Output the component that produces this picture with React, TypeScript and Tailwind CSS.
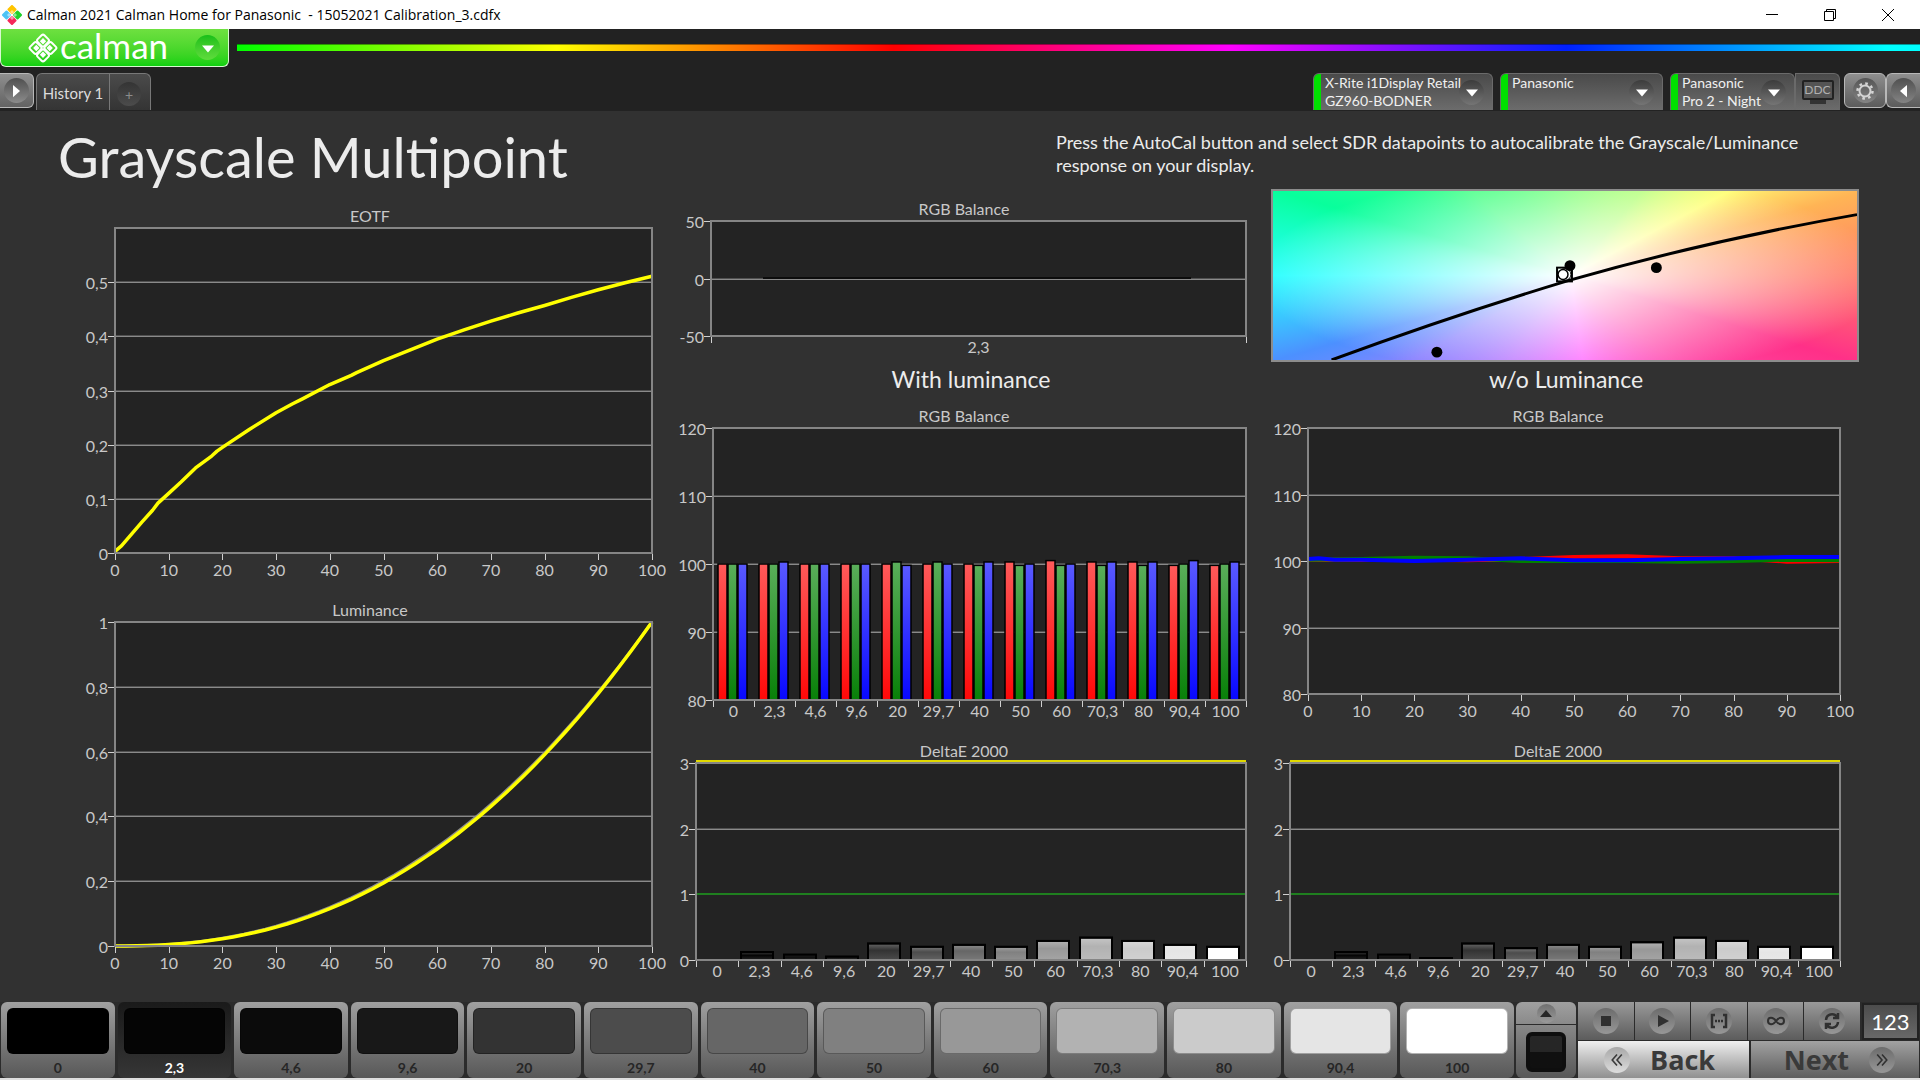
import type { ReactNode } from "react";

const LEVELS = ["0", "2,3", "4,6", "9,6", "20", "29,7", "40", "50", "60", "70,3", "80", "90,4", "100"];
const GRAYS = ["#000000", "#050505", "#0b0b0b", "#181818", "#333333", "#4c4c4c", "#666666", "#808080", "#989898", "#b2b2b2", "#cbcbcb", "#e5e5e5", "#ffffff"];
const TENS = ["0", "10", "20", "30", "40", "50", "60", "70", "80", "90", "100"];

// [stimulus, value]
const EOTF: number[][] = [
    [0, 0.003], [1.2, 0.013], [5, 0.057], [7, 0.079], [8, 0.092], [10, 0.11], [12.3, 0.131], [15, 0.157],
    [18, 0.179], [19, 0.188], [20, 0.195], [25, 0.228], [30, 0.259], [33, 0.275], [35, 0.285], [40, 0.311],
    [44, 0.328], [45, 0.333], [50, 0.355], [55, 0.375], [60, 0.395], [65, 0.412], [70, 0.428], [75, 0.443],
    [80, 0.457], [85, 0.472], [90, 0.486], [95, 0.499], [100, 0.511],
];
const LUMINANCE = Array.from({ length: 51 }, (_, i) => [i * 2, Math.pow(i / 50, 2.36)]);
const LUMINANCE_TARGET = Array.from({ length: 51 }, (_, i) => [i * 2, Math.pow(i / 50, 2.32)]);

const RGB_BARS: number[][] = [
    [100, 100, 100], [100, 100, 100.3], [100, 100, 100], [100, 100, 100], [100, 100.3, 99.8], [100, 100.3, 100],
    [100, 99.8, 100.3], [100.3, 99.8, 100], [100.5, 99.8, 100], [100.3, 99.8, 100.3], [100.3, 99.8, 100.3],
    [99.8, 100, 100.5], [99.8, 100, 100.3],
];

const RED_LINE = [[0, 100.2], [20, 100.2], [30, 100.1], [40, 100.3], [50, 100.6], [60, 100.7], [70, 100.4], [80, 100.4], [90, 99.9], [100, 100]];
const GREEN_LINE = [[0, 100.2], [10, 100.3], [20, 100.5], [30, 100.4], [40, 100], [60, 100], [70, 99.9], [80, 100], [90, 100.2], [100, 100.1]];
const BLUE_LINE = [[0, 100.3], [2, 100.4], [5, 100.2], [10, 100.2], [20, 100], [30, 100.2], [40, 100.4], [50, 100.1], [60, 100.1], [70, 100.3], [80, 100.4], [90, 100.6], [100, 100.6]];

const DELTA_WITH = [0, 0.12, 0.08, 0.05, 0.25, 0.2, 0.23, 0.2, 0.29, 0.34, 0.29, 0.23, 0.2];
const DELTA_WITHOUT = [0, 0.12, 0.08, 0.03, 0.25, 0.18, 0.23, 0.2, 0.27, 0.34, 0.29, 0.2, 0.2];

interface Plot {
    x: number;
    y: number;
    w: number;
    h: number;
    min: number;
    max: number;
}

const toY = (p: Plot, v: number) => p.y + p.h - ((v - p.min) / (p.max - p.min)) * p.h;
const toPoints = (p: Plot, data: number[][]) =>
    data.map(([x, v]) => `${p.x + (x / 100) * p.w},${toY(p, v)}`).join(" ");

interface ChartProps {
    title: string;
    titleX: number;
    width: number;
    height: number;
    plot: Plot;
    yTicks: [number, string][];
    xLabels: string[];
    banded?: boolean; // labels sit between the ticks
    children?: ReactNode;
}

function Chart({ title, titleX, width, height, plot, yTicks, xLabels, banded, children }: ChartProps) {
    const bottom = plot.y + plot.h;
    const tickCount = banded ? xLabels.length + 1 : xLabels.length;
    const step = plot.w / (tickCount - 1);
    return (
        <svg viewBox={`0 0 ${width} ${height}`} className="block h-auto w-full" role="img" aria-label={title}>
            <rect x={plot.x} y={plot.y} width={plot.w} height={plot.h} fill="#232323" />
            {yTicks.map(([v, label]) => {
                const y = Math.round(toY(plot, v));
                return (
                    <g key={label}>
                        <rect x={plot.x} y={y - 1} width={plot.w} height="1" fill="#505050" />
                        <rect x={plot.x} y={y} width={plot.w} height="1" fill="#8a8a8a" />
                        <rect x={plot.x - 7} y={y} width="6" height="1" fill="#d0d0d0" />
                        <text x={plot.x - 7} y={y + 7} textAnchor="end" fontSize="16" fill="#c8c8c8">{label}</text>
                    </g>
                );
            })}
            {children}
            <rect x={plot.x} y={plot.y} width={plot.w} height={plot.h} fill="none" stroke="#858585" strokeWidth="2" />
            {Array.from({ length: tickCount }, (_, i) => (
                <rect key={i} x={Math.round(plot.x + i * step)} y={bottom + 1} width="1" height="6" fill="#d0d0d0" />
            ))}
            {xLabels.map((label, i) => (
                <text
                    key={label}
                    x={plot.x + (banded ? i + 0.5 : i) * step}
                    y={bottom + (banded ? 17 : 23)}
                    textAnchor="middle"
                    fontSize="16"
                    fill="#c8c8c8"
                >
                    {label}
                </text>
            ))}
            <text x={titleX} y={plot.y - 6} textAnchor="middle" fontSize="16" fill="#c8c8c8">{title}</text>
        </svg>
    );
}

function DeltaChart({ width, plotX, titleX, plotW, values, id }: { width: number; plotX: number; titleX: number; plotW: number; values: number[]; id: string }) {
    const plot = { x: plotX, y: 33, w: plotW, h: 197, min: 0, max: 3 };
    const slot = plot.w / 13;
    return (
        <Chart
            title="DeltaE 2000"
            titleX={titleX}
            width={width}
            height={272}
            plot={plot}
            yTicks={[[3, "3"], [2, "2"], [1, "1"], [0, "0"]]}
            xLabels={LEVELS}
            banded
        >
            <defs>
                <linearGradient id={id} x1="0" y1="0" x2="0" y2="1">
                    <stop offset="0" stopColor="#fff" stopOpacity="0.25" />
                    <stop offset="0.4" stopColor="#fff" stopOpacity="0" />
                    <stop offset="1" stopColor="#fff" stopOpacity="0.12" />
                </linearGradient>
            </defs>
            <rect x={plot.x} y={plot.y - 3} width={plot.w} height="2" fill="#e0d800" />
            <rect x={plot.x} y={Math.round(toY(plot, 1)) - 1} width={plot.w} height="2" fill="#1f7f1f" />
            {values.map((v, i) => {
                if (v === 0) return null;
                const y = toY(plot, v);
                const box = { x: Math.round(plot.x + i * slot + 3), y, width: 32, height: plot.y + plot.h - y };
                return (
                    <g key={i} stroke="#000" strokeWidth="2">
                        <rect {...box} fill={GRAYS[i]} />
                        <rect {...box} fill={`url(#${id})`} />
                    </g>
                );
            })}
        </Chart>
    );
}

function CieChart() {
    return (
        <div className="h-[173px] pr-[5px] pl-[3px]">
            <div className="h-full border-2 border-[#8c8c8c] bg-[radial-gradient(ellipse_54%_60%_at_51%_50%,#ffffff_0%,rgba(255,255,255,0)_100%),conic-gradient(from_0deg_at_51%_50%,#8cff84_0deg,#b8ff80_40deg,#ffff78_62deg,#ffb455_74deg,#ff7c68_90deg,#ff3088_107deg,#ff50b0_130deg,#ff70ff_172deg,#c080ff_215deg,#8c84ff_242deg,#4c90ff_254deg,#28ffff_270deg,#08ff9c_286deg,#50ff8c_310deg,#8cff84_360deg)]">
                <svg viewBox="0 0 588 172" preserveAspectRatio="none" className="block h-full w-full" role="img" aria-label="CIE diagram">
                    <path d="M59 172Q180 127 298 91Q436 51 588 24" fill="none" stroke="#000" strokeWidth="3" />
                    <circle cx="165" cy="164" r="5.5" />
                    <circle cx="386" cy="78" r="5.5" />
                    <circle cx="299" cy="76" r="5.5" />
                    <rect x="286" y="78" width="15" height="14" fill="none" stroke="#000" strokeWidth="2" />
                    <circle cx="294" cy="85" r="6" fill="none" stroke="#000" />
                    <circle cx="292" cy="85" r="5" fill="#fff" stroke="#000" strokeWidth="1.5" />
                </svg>
            </div>
        </div>
    );
}

function ArrowDown() {
    return (
        <span className="flex size-[25px] shrink-0 items-center justify-center rounded-full bg-linear-to-b from-[#3c3c3c] to-[#757575]">
            <svg viewBox="0 0 14 8" className="h-2 w-3 translate-y-px fill-white"><path d="M0 0h14L7 8z" /></svg>
        </span>
    );
}

function DeviceTab({ line1, line2 }: { line1: string; line2?: string }) {
    return (
        <button className="flex h-[37px] w-full items-center overflow-hidden rounded-t-md border border-b-0 border-[#6a6a6a] bg-linear-to-b from-[#4a4a4a] to-[#6c6c6c] pr-2 text-left text-[14px] leading-[18px] text-[#f0f0f0]">
            <span className="mr-1 h-full w-[7px] shrink-0 bg-[#00e000]" />
            <span className="h-full min-w-0 flex-1 whitespace-nowrap">
                {line1}
                <br />
                {line2}
            </span>
            <ArrowDown />
        </button>
    );
}

function ToolButton({ label, children }: { label: string; children: ReactNode }) {
    return (
        <button aria-label={label} className="flex h-[38px] flex-1 items-center justify-center bg-linear-to-b from-[#9a9a9a] to-[#5c5c5c]">
            <span className="flex size-[26px] items-center justify-center rounded-full bg-linear-to-b from-[#6c6c6c] to-[#979797]">
                <svg viewBox="0 0 20 20" className="size-5" fill="none" stroke="#303030" strokeWidth="2">{children}</svg>
            </span>
        </button>
    );
}

function TitleBar() {
    return (
        <header className="flex h-[29px] items-center bg-white pl-0.5 font-['Open_Sans',sans-serif] text-[14px] text-black">
            <svg viewBox="0 0 20 20" className="mr-[5px] size-5">
                <rect x="6.500" y="1" width="7" height="7" rx="1" transform="rotate(45 10 4.5)" fill="#ffc400" />
                <rect x="1" y="6.500" width="7" height="7" rx="1" transform="rotate(45 4.5 10)" fill="#4cc3f5" />
                <rect x="12" y="6.500" width="7" height="7" rx="1" transform="rotate(45 15.5 10)" fill="#1fd02a" />
                <rect x="6.500" y="12" width="7" height="7" rx="1" transform="rotate(45 10 15.5)" fill="#f5285a" />
                <path d="M10 5l2 2-2 2-2-2zM10 11l2 2-2 2-2-2zM7 8l2 2-2 2-2-2zM13 8l2 2-2 2-2-2z" fill="#fff" opacity="0.5" />
            </svg>
            <h2 className="flex-1 whitespace-pre">Calman 2021 Calman Home for Panasonic  - 15052021 Calibration_3.cdfx</h2>
            <button aria-label="Minimize" className="flex h-full w-[58px] items-center justify-center">
                <svg viewBox="0 0 12 12" className="size-3" stroke="#000"><path d="M0 5.500h12" /></svg>
            </button>
            <button aria-label="Restore" className="flex h-full w-[58px] items-center justify-center">
                <svg viewBox="0 0 12 12" className="size-3" fill="none" stroke="#000"><path d="M.5 2.500h9v9h-9zM2.500 2.500v-2h9v9h-2" /></svg>
            </button>
            <button aria-label="Close" className="mr-[3px] flex h-full w-[58px] items-center justify-center">
                <svg viewBox="0 0 12 12" className="size-3" stroke="#000"><path d="M0 0l12 12M12 0L0 12" /></svg>
            </button>
        </header>
    );
}

function Toolbar() {
    return (
        <nav className="h-[82px] bg-[#222222]">
            <div className="flex h-11 items-start">
                <button className="flex h-[38px] w-[229px] items-center rounded-b-md border border-t-0 border-[#d8f8d0] bg-linear-to-b from-[#6ee040] to-[#0cd010] pr-2 pl-[27px] text-white">
                    <svg viewBox="0 0 30 30" className="mr-0.5 size-[30px]">
                        <g transform="rotate(45 15 15)">
                            <g fill="none" stroke="#fff" strokeWidth="2">
                                <rect x="5" y="5" width="9.500" height="9.500" rx="2" />
                                <rect x="15.500" y="5" width="9.500" height="9.500" rx="2" />
                                <rect x="5" y="15.500" width="9.500" height="9.500" rx="2" />
                                <rect x="15.500" y="15.500" width="9.500" height="9.500" rx="2" />
                            </g>
                            <path d="M8 8h4.500v4.500H8zM17.500 8H22v4.500h-4.500zM8 17.500h4.500V22H8zM17.500 17.500H22V22h-4.500z" fill="#fff" />
                        </g>
                    </svg>
                    <span className="flex-1 pb-1.5 text-left text-[35px] leading-8">calman</span>
                    <span className="flex size-[25px] items-center justify-center rounded-full bg-linear-to-b from-[#14bf18] to-[#5edc3c]">
                        <svg viewBox="0 0 14 8" className="h-2 w-3 translate-y-px fill-white"><path d="M0 0h14L7 8z" /></svg>
                    </span>
                </button>
                <div className="mt-[15px] ml-2 h-[7px] flex-1 border-t border-black/40 bg-[linear-gradient(to_right,#00ff00,#ffff00_19%,#ff0000_39%,#ff00ff_59%,#0020ff_79%,#00ffff_98%)]" />
            </div>
            <div className="flex h-[38px] items-start">
                <button aria-label="Expand" className="flex h-[35px] w-[34px] items-center justify-center rounded-r-md border border-l-0 border-[#b8b8b8] bg-linear-to-b from-[#8f8f8f] to-[#636363]">
                    <span className="flex size-[25px] items-center justify-center rounded-full bg-linear-to-b from-[#505050] to-[#8c8c8c]">
                        <svg viewBox="0 0 8 14" className="h-3.5 w-[7px] fill-white"><path d="M0 0v14l8-7z" /></svg>
                    </span>
                </button>
                <div className="ml-0.5 flex h-[37px] w-[115px] overflow-hidden rounded-t-md border border-b-0 border-[#787878] bg-linear-to-b from-[#4b4b4b] to-[#343434]">
                    <button className="w-[73px] border-r border-[#787878] pt-0.5 text-[15px] text-[#dcdcdc]">History 1</button>
                    <button aria-label="Add history" className="flex flex-1 items-center justify-center pr-0.5">
                        <span className="flex size-6 translate-y-0.5 items-center justify-center rounded-full bg-linear-to-b from-[#343434] to-[#4c4c4c] text-[14px] text-[#8c8c8c]">+</span>
                    </button>
                </div>
                <div className="flex-1" />
                <div className="w-[180px]"><DeviceTab line1="X-Rite i1Display Retail" line2="GZ960-BODNER" /></div>
                <div className="ml-[7px] w-[163px]"><DeviceTab line1="Panasonic" /></div>
                <div className="ml-[7px] flex w-[170px]">
                    <div className="w-[125px]"><DeviceTab line1="Panasonic" line2="Pro 2 - Night" /></div>
                    <button className="flex h-[37px] flex-1 flex-col items-center rounded-tr-md border border-b-0 border-[#6a6a6a] bg-linear-to-b from-[#4a4a4a] to-[#6c6c6c] pt-1.5 text-[12px]">
                        <span className="flex h-5 w-8 items-center justify-center rounded-xs border-2 border-[#222222] bg-[#545454] text-[#b0b0b0]">DDC</span>
                        <span className="h-1 w-4 bg-[#333333]" />
                    </button>
                </div>
                <button aria-label="Settings" className="ml-1 flex h-[35px] w-[42px] items-center justify-center rounded-md border border-[#b8b8b8] bg-linear-to-b from-[#8f8f8f] to-[#5c5c5c]">
                    <span className="flex size-[25px] items-center justify-center rounded-full bg-linear-to-b from-[#555555] to-[#848484]">
                        <svg viewBox="0 0 20 20" className="size-5" fill="none" stroke="#d4d4d4">
                            <circle cx="10" cy="10" r="5.5" strokeWidth="2" />
                            <circle cx="10" cy="10" r="7.500" strokeWidth="2.500" strokeDasharray="2.600 3.290" />
                        </svg>
                    </span>
                </button>
                <button aria-label="Collapse" className="flex h-[35px] w-[34px] items-center justify-center rounded-l-md border border-r-0 border-[#b8b8b8] bg-linear-to-b from-[#8f8f8f] to-[#5c5c5c]">
                    <span className="flex size-[25px] items-center justify-center rounded-full bg-linear-to-b from-[#505050] to-[#848484]">
                        <svg viewBox="0 0 8 14" className="h-3.5 w-[7px] fill-white"><path d="M8 0v14L0 7z" /></svg>
                    </span>
                </button>
            </div>
        </nav>
    );
}

function PatternBar() {
    return (
        <footer className="flex h-[78px] items-stretch border-b-2 border-[#dedede] bg-[#2b2b2b]">
            <div className="flex flex-1 gap-[3px] pr-0.5 pl-px">
                {LEVELS.map((level, i) => (
                    <button
                        key={level}
                        className={
                            level === "2,3"
                                ? "flex flex-1 flex-col rounded-md bg-linear-to-b from-[#1a1a1a] to-[#363636] px-1.5 pt-1.5 text-[14px] font-bold text-white"
                                : "flex flex-1 flex-col rounded-md bg-linear-to-b from-[#a0a0a0] to-[#585858] px-1.5 pt-1.5 text-[14px] font-bold text-[#262626]"
                        }
                    >
                        <span className="h-[46px] w-full rounded-md border border-black/30" style={{ backgroundColor: GRAYS[i] }} />
                        <span className="w-full pt-1 text-center leading-5">{level}</span>
                    </button>
                ))}
            </div>
            <div className="flex w-[60px] flex-col gap-px">
                <button aria-label="More patterns" className="flex h-[22px] items-center justify-center rounded-t-md bg-linear-to-b from-[#a0a0a0] to-[#8a8a8a]">
                    <span className="flex size-[19px] items-center justify-center rounded-full bg-linear-to-b from-[#707070] to-[#9a9a9a]">
                        <svg viewBox="0 0 12 7" className="h-[7px] w-3 fill-[#262626]"><path d="M0 7h12L6 0z" /></svg>
                    </span>
                </button>
                <button aria-label="Pattern window" className="flex flex-1 items-center justify-center rounded-b-md bg-linear-to-b from-[#888888] to-[#585858]">
                    <span className="size-10 rounded-md border-4 border-[#0e0e0e] bg-linear-to-b from-[#262626] from-50% to-[#101010] to-50%" />
                </button>
            </div>
            <div className="flex w-[344px] flex-col gap-px pr-px pl-0.5">
                <div className="flex gap-px">
                    <ToolButton label="Stop"><path d="M5 5h10v10H5z" fill="#303030" stroke="none" /></ToolButton>
                    <ToolButton label="Play"><path d="M6 4v12l11-6z" fill="#303030" stroke="none" /></ToolButton>
                    <ToolButton label="Read series"><path d="M6 4H3v12h3M14 4h3v12h-3M6 10h2M9 10h2M12 10h2" strokeWidth="2.500" /></ToolButton>
                    <ToolButton label="Continuous"><path d="M10 10C7 5.500 2 6 2 10s5 4.500 8 0s8-4 8 0s-5 4.500-8 0" /></ToolButton>
                    <ToolButton label="Refresh"><path d="M4 9a6 6 0 0 1 11-3M16 2v5h-5M16 11a6 6 0 0 1-11 3M4 18v-5h5" strokeWidth="2.500" /></ToolButton>
                    <span className="mt-px ml-px flex h-[37px] w-[57px] items-center justify-center border-2 border-[#222222] bg-linear-to-b from-[#4c4c4c] to-[#686868] text-[22px] text-white">123</span>
                </div>
                <div className="flex flex-1 gap-0.5 text-[27px] font-bold text-[#3a3a3a]">
                    <button className="flex flex-1 items-center gap-5 bg-linear-to-b from-[#f0f0f0] to-[#909090] pl-[26px] font-['Open_Sans',sans-serif] leading-9">
                        <span className="flex size-[26px] items-center justify-center rounded-full bg-linear-to-b from-[#a8a8a8] to-[#dddddd]">
                            <svg viewBox="0 0 20 20" className="size-4" fill="none" stroke="#3a3a3a" strokeWidth="2"><path d="M10 3l-6 7 6 7M16 3l-6 7 6 7" /></svg>
                        </span>
                        Back
                    </button>
                    <button className="flex flex-1 items-center justify-end gap-5 bg-linear-to-b from-[#a2a2a2] to-[#5e5e5e] pr-[24px] font-['Open_Sans',sans-serif] leading-9">
                        Next
                        <span className="flex size-[26px] items-center justify-center rounded-full bg-linear-to-b from-[#6c6c6c] to-[#979797]">
                            <svg viewBox="0 0 20 20" className="size-4" fill="none" stroke="#303030" strokeWidth="2"><path d="M4 3l6 7-6 7M10 3l6 7-6 7" /></svg>
                        </span>
                    </button>
                </div>
            </div>
        </footer>
    );
}

export default function App() {
    const eotf = { x: 115, y: 39, w: 537, h: 325, min: 0, max: 0.6 };
    const luminance = { x: 115, y: 32, w: 537, h: 324, min: 0, max: 1 };
    const single = { x: 37, y: 32, w: 535, h: 115, min: -50, max: 50 };
    const bars = { x: 39, y: 30, w: 533, h: 272, min: 80, max: 120 };
    const lines = { x: 40, y: 30, w: 532, h: 266, min: 80, max: 120 };
    const slot = bars.w / 13;

    return (
        <div className="flex min-h-screen flex-col bg-[#313131] font-[Lato,'Liberation_Sans',sans-serif]">
            <TitleBar />
            <Toolbar />
            <main className="flex-1">
                <div className="grid h-[78px] grid-cols-[1056fr_864fr]">
                    <h1 className="pt-2.5 pl-[58px] text-[56px] leading-[72px] text-[#ececec]">Grayscale Multipoint</h1>
                    <p className="max-w-[760px] pt-5 text-[18px] leading-[23px] text-[#ececec]">
                        Press the AutoCal button and select SDR datapoints to autocalibrate the Grayscale/Luminance response on your display.
                    </p>
                </div>
                <div className="grid grid-cols-[674fr_594fr_596fr] pr-14">
                    <section>
                        <Chart
                            title="EOTF"
                            titleX={370}
                            width={674}
                            height={401}
                            plot={eotf}
                            yTicks={[[0.5, "0,5"], [0.4, "0,4"], [0.3, "0,3"], [0.2, "0,2"], [0.1, "0,1"], [0, "0"]]}
                            xLabels={TENS}
                        >
                            <polyline points={toPoints(eotf, EOTF)} fill="none" stroke="#ffff00" strokeWidth="3.500" strokeLinejoin="round" />
                        </Chart>
                        <Chart
                            title="Luminance"
                            titleX={370}
                            width={674}
                            height={412}
                            plot={luminance}
                            yTicks={[[1, "1"], [0.8, "0,8"], [0.6, "0,6"], [0.4, "0,4"], [0.2, "0,2"], [0, "0"]]}
                            xLabels={TENS}
                        >
                            <polyline points={toPoints(luminance, LUMINANCE_TARGET)} fill="none" stroke="#8c8c8c" strokeWidth="3" />
                            <polyline points={toPoints(luminance, LUMINANCE)} fill="none" stroke="#ffff00" strokeWidth="3.500" />
                        </Chart>
                    </section>

                    <section>
                        <Chart
                            title="RGB Balance"
                            titleX={290}
                            width={594}
                            height={173}
                            plot={single}
                            yTicks={[[50, "50"], [0, "0"], [-50, "-50"]]}
                            xLabels={["2,3"]}
                            banded
                        >
                            <rect x="89" y="88" width="428" height="2" fill="#0c0c0c" />
                        </Chart>
                        <h3 className="text-center text-[23px] leading-[34px] pb-0.5 text-[#ececec]">With luminance</h3>
                        <Chart
                            title="RGB Balance"
                            titleX={290}
                            width={594}
                            height={332}
                            plot={bars}
                            yTicks={[[120, "120"], [110, "110"], [100, "100"], [90, "90"], [80, "80"]]}
                            xLabels={LEVELS}
                            banded
                        >
                            <defs>
                                {[["red", "#ff5a5a", "#ff0808"], ["green", "#5aae5a", "#088008"], ["blue", "#5a5aff", "#0808ff"]].map(([id, from, to]) => (
                                    <linearGradient key={id} id={id} x1="0" y1="0" x2="0" y2="1">
                                        <stop offset="0" stopColor={from} />
                                        <stop offset="1" stopColor={to} />
                                    </linearGradient>
                                ))}
                            </defs>
                            {RGB_BARS.map((group, i) =>
                                group.map((v, c) => {
                                    const y = toY(bars, v);
                                    return (
                                        <rect
                                            key={`${i}-${c}`}
                                            x={Math.round(bars.x + i * slot + 4.5 + c * 10.3)}
                                            y={y}
                                            width="9"
                                            height={bars.y + bars.h - y}
                                            fill={["url(#red)", "url(#green)", "url(#blue)"][c]}
                                            stroke="#000"
                                            strokeWidth="1.5"
                                        />
                                    );
                                })
                            )}
                        </Chart>
                        <DeltaChart id="shineA" width={594} plotX={22} plotW={550} titleX={290} values={DELTA_WITH} />
                    </section>

                    <section>
                        <CieChart />
                        <h3 className="text-center text-[23px] leading-[34px] pb-0.5 text-[#ececec]">w/o Luminance</h3>
                        <Chart
                            title="RGB Balance"
                            titleX={290}
                            width={596}
                            height={332}
                            plot={lines}
                            yTicks={[[120, "120"], [110, "110"], [100, "100"], [90, "90"], [80, "80"]]}
                            xLabels={TENS}
                        >
                            <g fill="none" strokeWidth="4">
                                <polyline points={toPoints(lines, RED_LINE)} stroke="#ff0000" />
                                <polyline points={toPoints(lines, GREEN_LINE)} stroke="#008000" />
                                <polyline points={toPoints(lines, BLUE_LINE)} stroke="#0000ff" />
                            </g>
                        </Chart>
                        <DeltaChart id="shineB" width={596} plotX={22} plotW={550} titleX={290} values={DELTA_WITHOUT} />
                    </section>
                </div>
            </main>
            <PatternBar />
        </div>
    );
}
